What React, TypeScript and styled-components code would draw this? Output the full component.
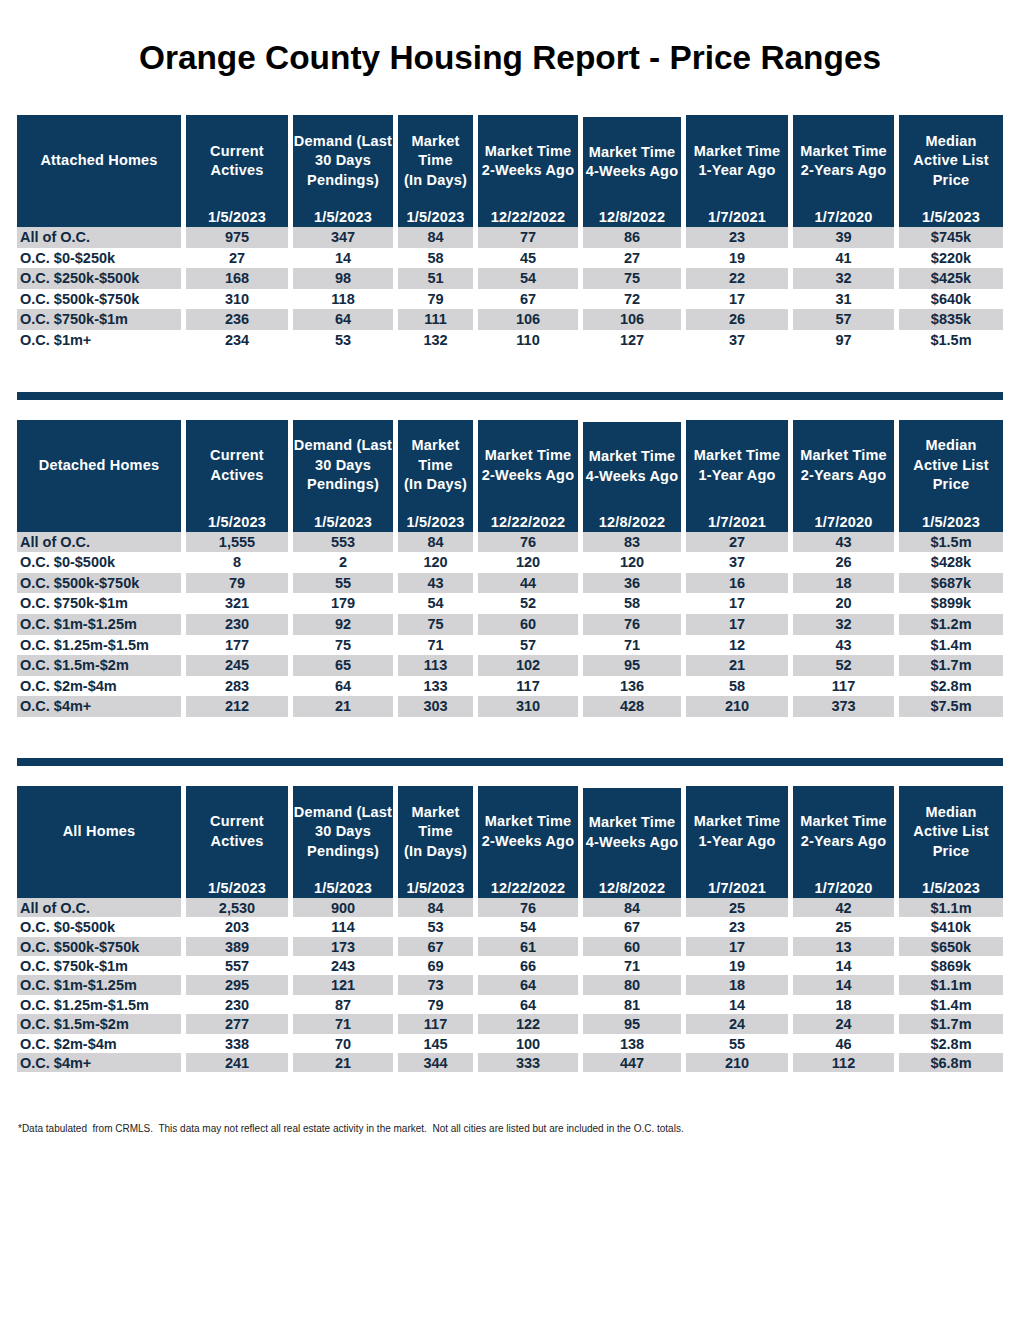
import { FC } from 'react';
import styled, { createGlobalStyle } from 'styled-components';

const NAVY = '#0d3b5f';
const ROW_GRAY = '#d3d3d5';
const INK = '#112a42';

const COLUMNS = '164px 102px 100px 75px 100px 98px 102px 101px 104px';

interface IHeaderCol {
  label: string[];
  date: string;
  lowered?: boolean;
}

const headerCols: IHeaderCol[] = [
  { label: ['Current', 'Actives'], date: '1/5/2023' },
  { label: ['Demand (Last', '30 Days', 'Pendings)'], date: '1/5/2023' },
  { label: ['Market', 'Time', '(In Days)'], date: '1/5/2023' },
  { label: ['Market Time', '2-Weeks Ago'], date: '12/22/2022' },
  { label: ['Market Time', '4-Weeks Ago'], date: '12/8/2022', lowered: true },
  { label: ['Market Time', '1-Year Ago'], date: '1/7/2021' },
  { label: ['Market Time', '2-Years Ago'], date: '1/7/2020' },
  { label: ['Median', 'Active List', 'Price'], date: '1/5/2023' },
];

type Row = [string, string, string, string, string, string, string, string, string];

interface ISection {
  title: string;
  rowHeight: number;
  rows: Row[];
}

const sections: ISection[] = [
  {
    title: 'Attached Homes',
    rowHeight: 20.6,
    rows: [
      ['All of O.C.', '975', '347', '84', '77', '86', '23', '39', '$745k'],
      ['O.C. $0-$250k', '27', '14', '58', '45', '27', '19', '41', '$220k'],
      ['O.C. $250k-$500k', '168', '98', '51', '54', '75', '22', '32', '$425k'],
      ['O.C. $500k-$750k', '310', '118', '79', '67', '72', '17', '31', '$640k'],
      ['O.C. $750k-$1m', '236', '64', '111', '106', '106', '26', '57', '$835k'],
      ['O.C. $1m+', '234', '53', '132', '110', '127', '37', '97', '$1.5m'],
    ],
  },
  {
    title: 'Detached Homes',
    rowHeight: 20.6,
    rows: [
      ['All of O.C.', '1,555', '553', '84', '76', '83', '27', '43', '$1.5m'],
      ['O.C. $0-$500k', '8', '2', '120', '120', '120', '37', '26', '$428k'],
      ['O.C. $500k-$750k', '79', '55', '43', '44', '36', '16', '18', '$687k'],
      ['O.C. $750k-$1m', '321', '179', '54', '52', '58', '17', '20', '$899k'],
      ['O.C. $1m-$1.25m', '230', '92', '75', '60', '76', '17', '32', '$1.2m'],
      ['O.C. $1.25m-$1.5m', '177', '75', '71', '57', '71', '12', '43', '$1.4m'],
      ['O.C. $1.5m-$2m', '245', '65', '113', '102', '95', '21', '52', '$1.7m'],
      ['O.C. $2m-$4m', '283', '64', '133', '117', '136', '58', '117', '$2.8m'],
      ['O.C. $4m+', '212', '21', '303', '310', '428', '210', '373', '$7.5m'],
    ],
  },
  {
    title: 'All Homes',
    rowHeight: 19.4,
    rows: [
      ['All of O.C.', '2,530', '900', '84', '76', '84', '25', '42', '$1.1m'],
      ['O.C. $0-$500k', '203', '114', '53', '54', '67', '23', '25', '$410k'],
      ['O.C. $500k-$750k', '389', '173', '67', '61', '60', '17', '13', '$650k'],
      ['O.C. $750k-$1m', '557', '243', '69', '66', '71', '19', '14', '$869k'],
      ['O.C. $1m-$1.25m', '295', '121', '73', '64', '80', '18', '14', '$1.1m'],
      ['O.C. $1.25m-$1.5m', '230', '87', '79', '64', '81', '14', '18', '$1.4m'],
      ['O.C. $1.5m-$2m', '277', '71', '117', '122', '95', '24', '24', '$1.7m'],
      ['O.C. $2m-$4m', '338', '70', '145', '100', '138', '55', '46', '$2.8m'],
      ['O.C. $4m+', '241', '21', '344', '333', '447', '210', '112', '$6.8m'],
    ],
  },
];

const PriceTable: FC<{ section: ISection }> = ({ section }) => (
  <StyledTable>
    <StyledHeaderCell>
      <StyledHeaderLabel>{section.title}</StyledHeaderLabel>
      <StyledHeaderDate />
    </StyledHeaderCell>
    {headerCols.map((col, i) => (
      <StyledHeaderCell key={i} $lowered={col.lowered}>
        <StyledHeaderLabel>
          {col.label.map((line) => (
            <span key={line}>{line}</span>
          ))}
        </StyledHeaderLabel>
        <StyledHeaderDate>{col.date}</StyledHeaderDate>
      </StyledHeaderCell>
    ))}
    {section.rows.map((row, r) =>
      row.map((value, c) => (
        <StyledDataCell
          key={`${r}-${c}`}
          $shaded={r % 2 === 0}
          $first={c === 0}
          $height={section.rowHeight}
        >
          {value}
        </StyledDataCell>
      )),
    )}
  </StyledTable>
);

const App: FC = () => (
  <>
    <GlobalStyle />
    <StyledPage>
      <StyledTitle>Orange County Housing Report - Price Ranges</StyledTitle>
      <PriceTable section={sections[0]} />
      <StyledDivider />
      <PriceTable section={sections[1]} />
      <StyledDivider />
      <PriceTable section={sections[2]} />
      <StyledFootnote>
        *Data tabulated&nbsp; from CRMLS.&nbsp; This data may not reflect all real estate
        activity in the market.&nbsp; Not all cities are listed but are included in the
        O.C. totals.
      </StyledFootnote>
    </StyledPage>
  </>
);

const GlobalStyle = createGlobalStyle`
  html, body {
    margin: 0;
    padding: 0;
    background: #ffffff;
  }
  body {
    font-family: 'Liberation Sans', Arial, sans-serif;
  }
`;

const StyledPage = styled.div`
  width: 1020px;
  min-height: 1320px;
  box-sizing: border-box;
  padding: 38px 17px 0;
  display: flex;
  flex-direction: column;
  background: #fff;
`;

const StyledTitle = styled.h1`
  margin: 0 0 37px;
  height: 40px;
  line-height: 40px;
  font-size: 33.4px;
  font-weight: 700;
  text-align: center;
  color: #000;
`;

const StyledTable = styled.div`
  display: grid;
  grid-template-columns: ${COLUMNS};
  column-gap: 5px;
  font-size: 14.5px;
  font-weight: 700;
`;

const StyledHeaderCell = styled.div<{ $lowered?: boolean }>`
  height: ${({ $lowered }) => ($lowered ? 110 : 112)}px;
  margin-top: ${({ $lowered }) => ($lowered ? 2 : 0)}px;
  background: ${NAVY};
  color: #fff;
  display: flex;
  flex-direction: column;
  text-align: center;
  letter-spacing: 0.2px;
  overflow: visible;
`;

const StyledHeaderLabel = styled.div`
  flex: 1;
  display: flex;
  flex-direction: column;
  justify-content: center;
  align-items: center;
  line-height: 19.5px;
  white-space: nowrap;
  span {
    display: block;
  }
`;

const StyledHeaderDate = styled.div`
  height: 20px;
  line-height: 20px;
`;

const StyledDataCell = styled.div<{ $shaded: boolean; $first: boolean; $height: number }>`
  height: ${({ $height }) => $height}px;
  line-height: ${({ $height }) => $height + 1}px;
  background: ${({ $shaded }) => ($shaded ? ROW_GRAY : '#fff')};
  color: ${INK};
  text-align: ${({ $first }) => ($first ? 'left' : 'center')};
  padding-left: ${({ $first }) => ($first ? 3 : 0)}px;
  white-space: nowrap;
`;

const StyledDivider = styled.div`
  height: 8px;
  margin: 41px 0 20px;
  background: ${NAVY};
`;

const StyledFootnote = styled.p`
  margin: 51px 0 0 1px;
  font-size: 10px;
  line-height: 12px;
  color: #222;
  white-space: nowrap;
`;

export default App;
